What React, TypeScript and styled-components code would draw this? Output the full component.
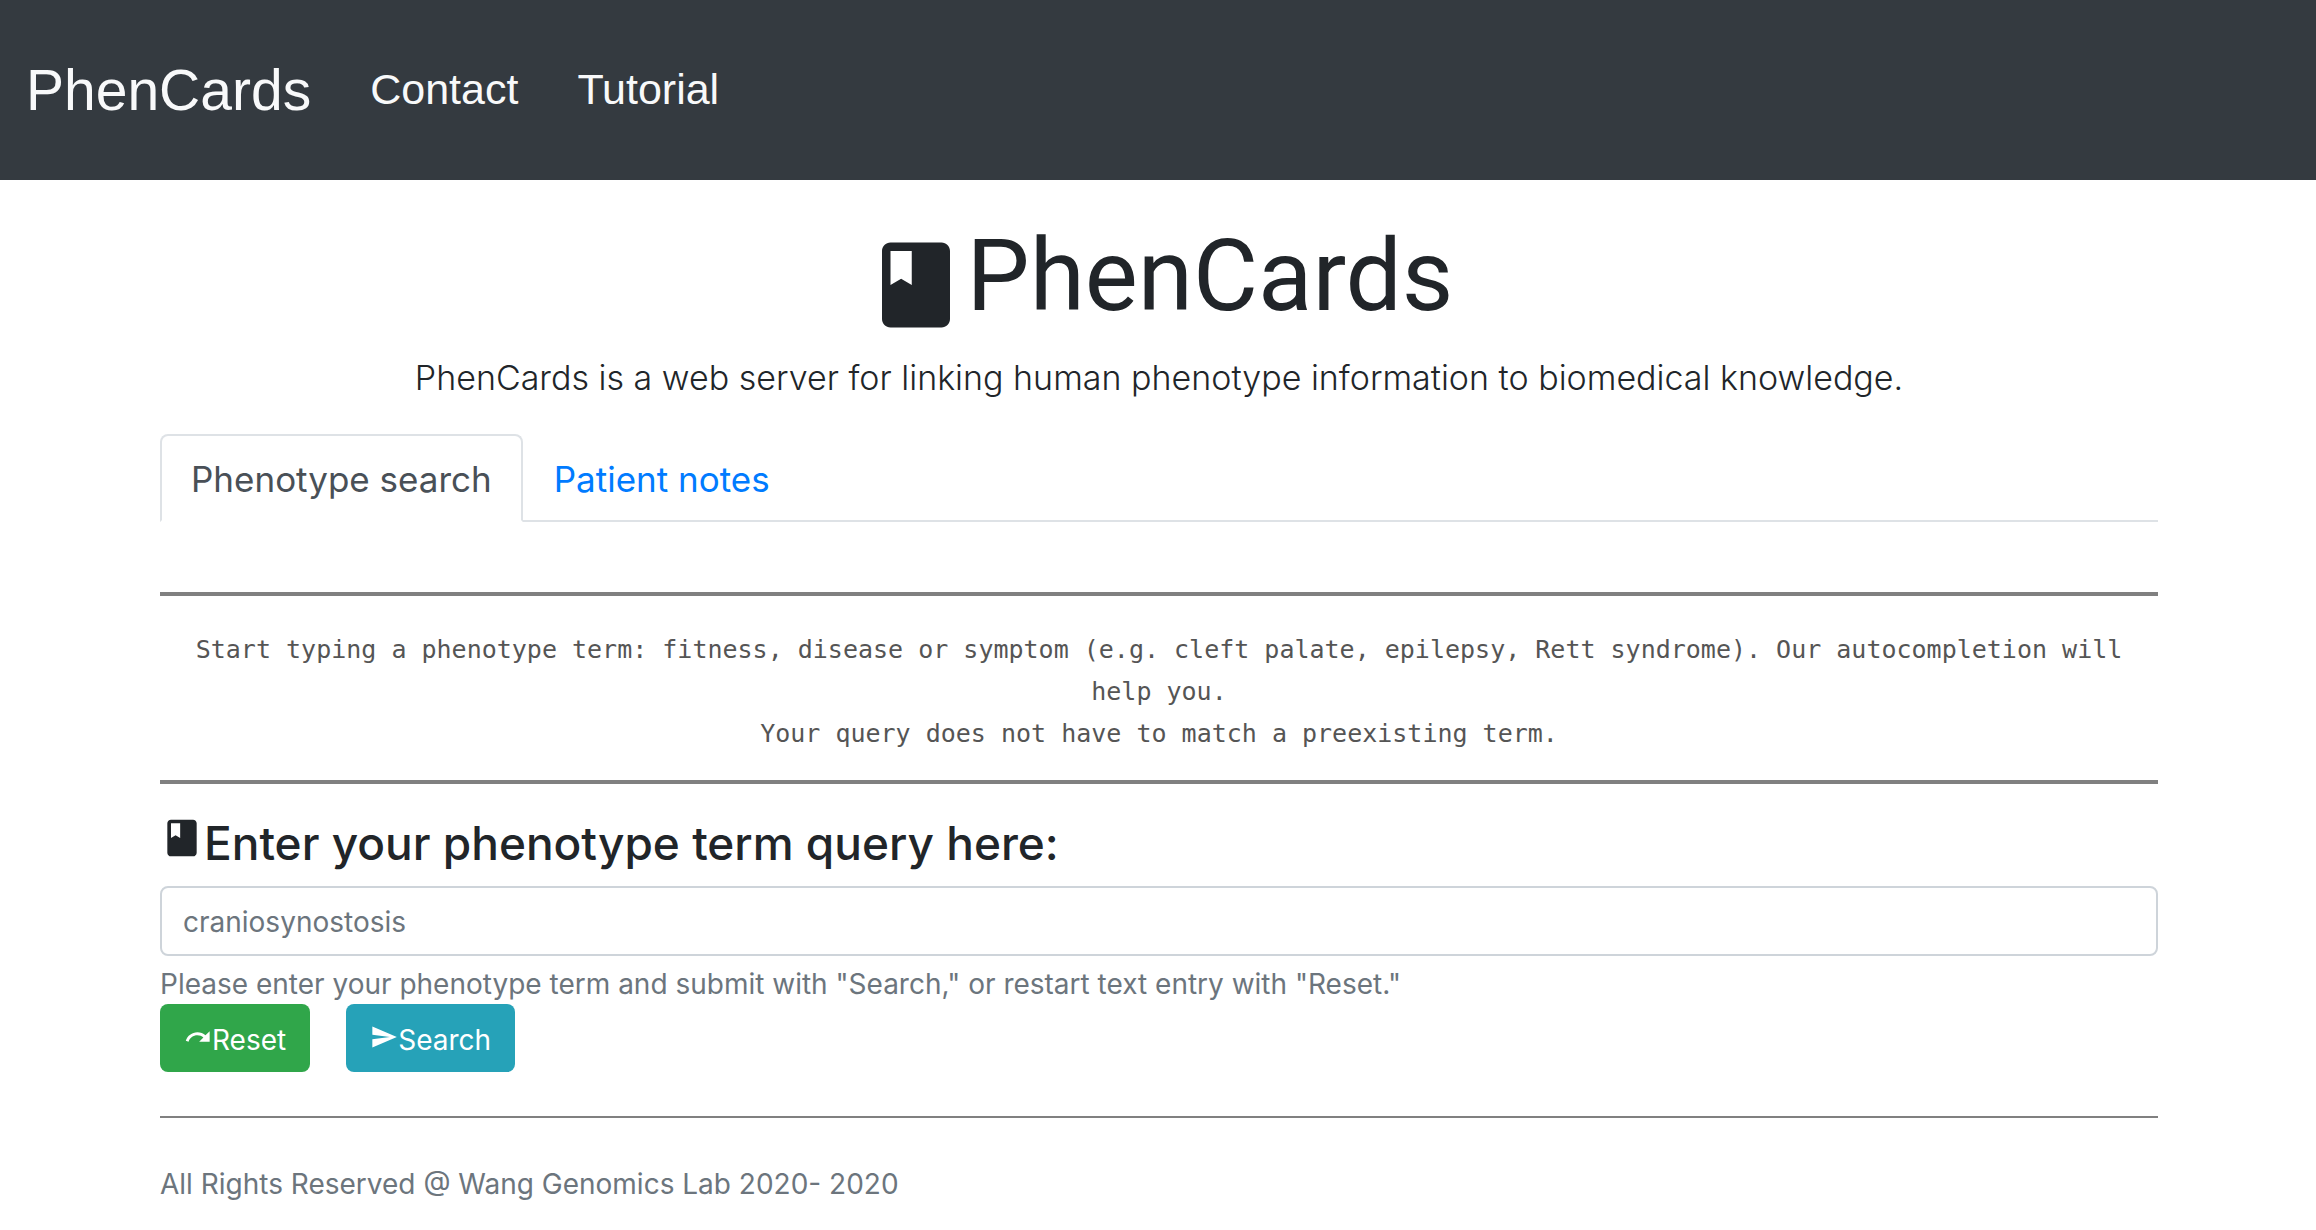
import React, { useState } from "react";
import styled, { createGlobalStyle } from "styled-components";

const GlobalStyle = createGlobalStyle`
  *, *::before, *::after { box-sizing: border-box; }
  body {
    margin: 0;
    background: #ffffff;
    color: #212529;
    font-family: Inter, Roboto, sans-serif;
    font-size: 28px;
    line-height: 42px;
  }
`;

const Navbar = styled.nav`
  display: flex;
  align-items: center;
  gap: 59px;
  height: 180px;
  padding: 0 26px;
  background: #343a40;
  font-family: "Liberation Sans", Arial, sans-serif;
`;

const NavLink = styled.a<{ $brand?: boolean }>`
  padding-bottom: ${(p) => (p.$brand ? 0 : 3)}px;
  color: #f8f9fa;
  font-size: ${(p) => (p.$brand ? 57 : 43)}px;
  line-height: 64px;
  text-decoration: none;
`;

const Container = styled.div`
  padding: 0 158px 0 160px;
`;

const Hero = styled.header`
  padding-top: 34px;
  text-align: center;
`;

const Title = styled.h1`
  display: flex;
  justify-content: center;
  align-items: center;
  margin: 0;
  font-family: Roboto, sans-serif;
  font-size: 100px;
  font-weight: 400;
  line-height: 124px;
`;

const TitleIcon = styled.svg`
  width: 102px;
  height: 102px;
  margin-top: 18px;
  fill: currentColor;
`;

const Lead = styled.p`
  margin: 14px 0 0;
  font-size: 34px;
  font-weight: 300;
  line-height: 52px;
`;

const Tabs = styled.div`
  display: flex;
  margin-top: 30px;
  border-bottom: 2px solid #dee2e6;
`;

const Tab = styled.button<{ $active?: boolean }>`
  margin-bottom: -2px;
  padding: 17px 29px 15px;
  border: 2px solid;
  border-color: ${(p) => (p.$active ? "#dee2e6 #dee2e6 #ffffff" : "transparent")};
  border-radius: 8px 8px 0 0;
  background: ${(p) => (p.$active ? "#ffffff" : "transparent")};
  color: ${(p) => (p.$active ? "#495057" : "#007bff")};
  font: inherit;
  font-size: 35px;
  line-height: 52px;
`;

const Hint = styled.p`
  margin: 70px 0 0;
  padding: 33px 24px 25px;
  border: solid #808080;
  border-width: 4px 0;
  color: #555555;
  font-family: "DejaVu Sans Mono", monospace;
  font-size: 25px;
  line-height: 42px;
  text-align: center;
`;

const Form = styled.form`
  display: flex;
  flex-direction: column;
`;

const Label = styled.label`
  display: flex;
  align-items: center;
  margin: 30px 0 14px;
  font-size: 46px;
  font-weight: 500;
  line-height: 58px;
`;

const LabelIcon = styled.svg`
  width: 44px;
  height: 44px;
  margin-bottom: 10px;
  fill: currentColor;
`;

const TextBox = styled.input`
  width: 100%;
  height: 70px;
  padding: 2px 21px 0;
  border: 2px solid #ced4da;
  border-radius: 8px;
  background: #ffffff;
  color: #495057;
  font: inherit;

  &::placeholder {
    color: #6c757d;
    opacity: 1;
  }
`;

const Help = styled.small`
  margin-top: 8px;
  color: #6c757d;
  font-size: 28px;
  line-height: 40px;
`;

const Actions = styled.div`
  display: flex;
  gap: 36px;
`;

const Button = styled.button<{ $color: string }>`
  display: flex;
  align-items: center;
  height: 68px;
  padding: 3px 24px 0;
  border: 0;
  border-radius: 8px;
  background: ${(p) => p.$color};
  color: #ffffff;
  font: inherit;
`;

const ButtonIcon = styled.svg`
  width: 28px;
  height: 28px;
  margin-bottom: 6px;
  fill: currentColor;
`;

const Footer = styled.footer`
  margin-top: 44px;
  padding: 45px 0;
  border-top: 2px solid #808080;
  color: #6c757d;
`;

const BOOK =
  "M18 2H6c-1.1 0-2 .9-2 2v16c0 1.1.9 2 2 2h12c1.1 0 2-.9 2-2V4c0-1.1-.9-2-2-2zM6 4h5v8l-2.5-1.5L6 12V4z";
const REDO =
  "M18.4 10.6C16.55 8.99 14.15 8 11.5 8c-4.65 0-8.58 3.03-9.96 7.22L3.9 16c1.05-3.19 4.05-5.5 7.6-5.5 1.95 0 3.73.72 5.12 1.88L13 16h9V7l-3.6 3.6z";
const SEND = "M2.01 21L23 12 2.01 3 2 10l15 2-15 2z";

export default function App() {
  const [query, setQuery] = useState("");

  return (
    <>
      <GlobalStyle />
      <Navbar>
        <NavLink href="#home" $brand>PhenCards</NavLink>
        <NavLink href="#contact">Contact</NavLink>
        <NavLink href="#tutorial">Tutorial</NavLink>
      </Navbar>
      <Container>
        <Hero>
          <Title>
            <TitleIcon viewBox="0 0 24 24" aria-hidden="true"><path d={BOOK} /></TitleIcon>
            PhenCards
          </Title>
          <Lead>PhenCards is a web server for linking human phenotype information to biomedical knowledge.</Lead>
        </Hero>
        <main>
          <Tabs role="tablist">
            <Tab type="button" role="tab" aria-selected="true" $active>Phenotype search</Tab>
            <Tab type="button" role="tab" aria-selected="false">Patient notes</Tab>
          </Tabs>
          <Hint>
            Start typing a phenotype term: fitness, disease or symptom (e.g. cleft palate, epilepsy, Rett
            syndrome). Our autocompletion will help you.
            <br />
            Your query does not have to match a preexisting term.
          </Hint>
          <Form onSubmit={(e) => e.preventDefault()} onReset={() => setQuery("")}>
            <Label htmlFor="query">
              <LabelIcon viewBox="0 0 24 24" aria-hidden="true"><path d={BOOK} /></LabelIcon>
              Enter your phenotype term query here:
            </Label>
            <TextBox
              id="query"
              type="text"
              placeholder="craniosynostosis"
              aria-describedby="query-help"
              value={query}
              onChange={(e) => setQuery(e.target.value)}
            />
            <Help id="query-help">
              Please enter your phenotype term and submit with "Search," or restart text entry with "Reset."
            </Help>
            <Actions>
              <Button type="reset" $color="#30a64a">
                <ButtonIcon viewBox="0 0 24 24" aria-hidden="true"><path d={REDO} /></ButtonIcon>
                Reset
              </Button>
              <Button type="submit" $color="#26a2b8">
                <ButtonIcon viewBox="0 0 24 24" aria-hidden="true"><path d={SEND} /></ButtonIcon>
                Search
              </Button>
            </Actions>
          </Form>
        </main>
        <Footer>All Rights Reserved @ Wang Genomics Lab 2020- 2020</Footer>
      </Container>
    </>
  );
}
